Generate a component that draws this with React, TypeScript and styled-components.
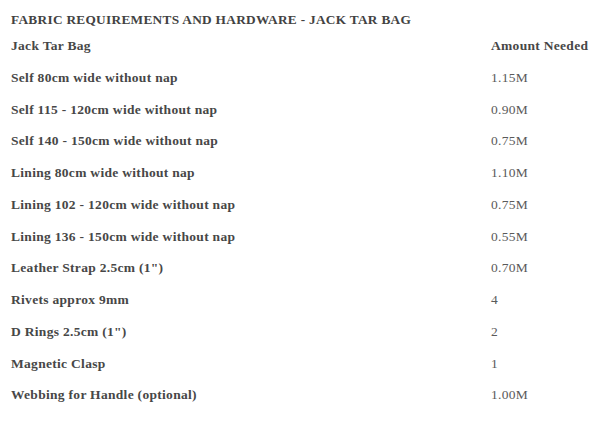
import React from "react";
import styled, { createGlobalStyle } from "styled-components";

const Global = createGlobalStyle`
  html, body { margin: 0; padding: 0; background: #fff; }
  body { font-family: "Liberation Serif", "Times New Roman", serif; }
`;

const Page = styled.div`
  padding: 11px 11px 0 11px;
  width: 600px;
  box-sizing: border-box;
`;

const Title = styled.h2`
  margin: 0;
  font-size: 13.3px;
  font-weight: bold;
  color: #424242;
  letter-spacing: 0.3px;
  line-height: 18px;
`;

const Table = styled.div`
  display: grid;
  grid-template-columns: 480px 1fr;
  margin-top: 9px;
`;

const Cell = styled.div<{ $bold?: boolean }>`
  height: 31.75px;
  font-size: 13.5px;
  line-height: 16px;
  color: ${(p) => (p.$bold ? "#474747" : "#5a5a5a")};
  font-weight: ${(p) => (p.$bold ? "bold" : "normal")};
  letter-spacing: 0.3px;
`;

const rows: [string, string][] = [
  ["Self 80cm wide without nap", "1.15M"],
  ["Self 115 - 120cm wide without nap", "0.90M"],
  ["Self 140 - 150cm wide without nap", "0.75M"],
  ["Lining 80cm wide without nap", "1.10M"],
  ["Lining 102 - 120cm wide without nap", "0.75M"],
  ["Lining 136 - 150cm wide without nap", "0.55M"],
  ["Leather Strap 2.5cm (1\")", "0.70M"],
  ["Rivets approx 9mm", "4"],
  ["D Rings 2.5cm (1\")", "2"],
  ["Magnetic Clasp", "1"],
  ["Webbing for Handle (optional)", "1.00M"],
];

export default function App() {
  return (
    <Page>
      <Global />
      <Title>FABRIC REQUIREMENTS AND HARDWARE - JACK TAR BAG</Title>
      <Table>
        <Cell $bold>Jack Tar Bag</Cell>
        <Cell $bold>Amount Needed</Cell>
        {rows.map(([label, amount]) => (
          <React.Fragment key={label}>
            <Cell $bold>{label}</Cell>
            <Cell>{amount}</Cell>
          </React.Fragment>
        ))}
      </Table>
    </Page>
  );
}
